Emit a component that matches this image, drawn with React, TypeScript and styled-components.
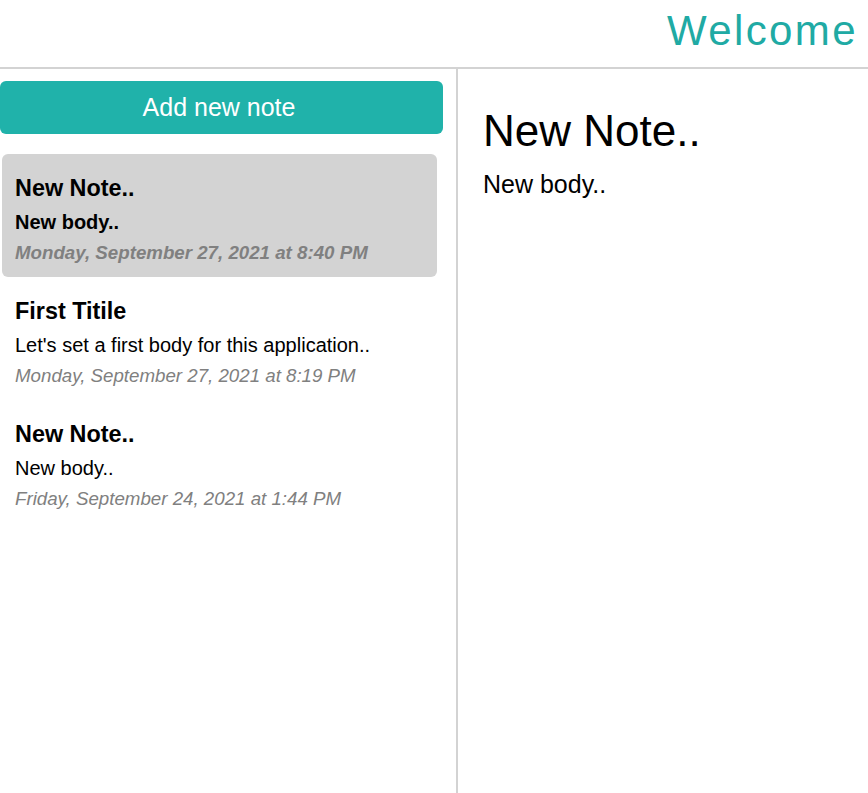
import React from "react";
import styled, { createGlobalStyle } from "styled-components";

const Global = createGlobalStyle`
  html, body { margin: 0; padding: 0; background: #ffffff; }
  body { font-family: "Liberation Sans", Arial, sans-serif; color: #000; }
  * { box-sizing: border-box; }
`;

const Page = styled.div`
  display: flex;
  flex-direction: column;
  height: 793px;
  overflow: hidden;
`;

const Header = styled.header`
  height: 69px;
  flex: none;
  display: flex;
  justify-content: flex-end;
  align-items: flex-start;
  padding: 6px 10px 0 0;
  border-bottom: 2px solid #d3d3d3;
`;

const Welcome = styled.h1`
  margin: 0;
  font-size: 42px;
  line-height: 50px;
  font-weight: 400;
  letter-spacing: 2.4px;
  color: #20aaa4;
`;

const Body = styled.div`
  flex: 1;
  display: flex;
  min-height: 0;
`;

const Sidebar = styled.aside`
  width: 458px;
  flex: none;
  border-right: 2px solid #d3d3d3;
  display: flex;
  flex-direction: column;
  padding-top: 12px;
`;

const AddButton = styled.button`
  width: 443px;
  height: 53px;
  border: none;
  border-radius: 6px;
  background: #20b2aa;
  color: #ffffff;
  font-family: "Liberation Sans", Arial, sans-serif;
  font-size: 25px;
  line-height: 53px;
  padding: 0 5px 0 0;
  cursor: pointer;
`;

const NoteList = styled.div`
  display: flex;
  flex-direction: column;
  margin-top: 20px;
  padding-left: 2px;
`;

const NoteItem = styled.div<{ $active?: boolean }>`
  width: 435px;
  height: 123px;
  padding: 20px 12px 12px 13px;
  border-radius: 6px;
  background: ${(p) => (p.$active ? "#d3d3d3" : "transparent")};
  display: flex;
  flex-direction: column;
  cursor: pointer;
`;

const NoteTitle = styled.div`
  font-size: 23.4px;
  line-height: 28px;
  font-weight: 700;
`;

const NoteBody = styled.div<{ $active?: boolean }>`
  margin-top: 8px;
  font-size: 20px;
  line-height: 24px;
  font-weight: ${(p) => (p.$active ? 700 : 400)};
  white-space: nowrap;
`;

const NoteDate = styled.div<{ $active?: boolean }>`
  margin-top: 7px;
  font-size: 18.72px;
  line-height: 24px;
  font-style: italic;
  color: #808080;
  font-weight: ${(p) => (p.$active ? 700 : 400)};
`;

const Main = styled.main`
  flex: 1;
  padding: 36px 25px 0;
  display: flex;
  flex-direction: column;
`;

const MainTitle = styled.h1`
  margin: 0;
  font-size: 44px;
  line-height: 52px;
  font-weight: 400;
`;

const MainBody = styled.p`
  margin: 13px 0 0;
  font-size: 25px;
  line-height: 28px;
`;

const notes = [
  { title: "New Note..", body: "New body..", date: "Monday, September 27, 2021 at 8:40 PM", active: true },
  { title: "First Titile", body: "Let's set a first body for this application..", date: "Monday, September 27, 2021 at 8:19 PM", active: false },
  { title: "New Note..", body: "New body..", date: "Friday, September 24, 2021 at 1:44 PM", active: false },
];

export default function App() {
  return (
    <Page>
      <Global />
      <Header>
        <Welcome>Welcome</Welcome>
      </Header>
      <Body>
        <Sidebar>
          <AddButton>Add new note</AddButton>
          <NoteList>
            {notes.map((n, i) => (
              <NoteItem key={i} $active={n.active}>
                <NoteTitle>{n.title}</NoteTitle>
                <NoteBody $active={n.active}>{n.body}</NoteBody>
                <NoteDate $active={n.active}>{n.date}</NoteDate>
              </NoteItem>
            ))}
          </NoteList>
        </Sidebar>
        <Main>
          <MainTitle>New Note..</MainTitle>
          <MainBody>New body..</MainBody>
        </Main>
      </Body>
    </Page>
  );
}
